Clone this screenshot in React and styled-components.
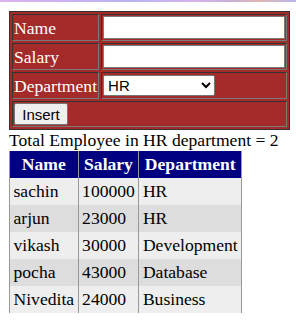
import React from 'react';
import styled, { createGlobalStyle } from 'styled-components';

const GlobalStyle = createGlobalStyle`
  body {
    margin: 0;
    background: #fff;
    font-family: "Liberation Serif", "Times New Roman", serif;
    font-size: 17.6px;
  }
`;

const employees = [
  { name: 'sachin', salary: 100000, department: 'HR' },
  { name: 'arjun', salary: 23000, department: 'HR' },
  { name: 'vikash', salary: 30000, department: 'Development' },
  { name: 'pocha', salary: 43000, department: 'Database' },
  { name: 'Nivedita', salary: 24000, department: 'Business' },
];

function App() {
  const dept = 'HR';
  const count = employees.filter((e) => e.department === dept).length;

  return (
    <>
      <GlobalStyle />
      <Strip />
      <Page>
        <FormTable>
          <tbody>
            <tr>
              <Label>Name</Label>
              <Field><TextInput type="text" /></Field>
            </tr>
            <tr>
              <Label>Salary</Label>
              <Field><TextInput type="text" /></Field>
            </tr>
            <tr>
              <Label>Department</Label>
              <Field>
                <Select defaultValue="HR">
                  <option>HR</option>
                  <option>Development</option>
                  <option>Database</option>
                  <option>Business</option>
                </Select>
              </Field>
            </tr>
            <tr>
              <Field colSpan={2}><Button>Insert</Button></Field>
            </tr>
          </tbody>
        </FormTable>

        <Total>Total Employee in {dept} department = {count}</Total>

        <DataTable>
          <thead>
            <tr>
              <Th>Name</Th>
              <Th>Salary</Th>
              <Th>Department</Th>
            </tr>
          </thead>
          <tbody>
            {employees.map((e, i) => (
              <Row key={e.name} $odd={i % 2 === 1}>
                <Td>{e.name}</Td>
                <Td>{e.salary}</Td>
                <Td>{e.department}</Td>
              </Row>
            ))}
          </tbody>
        </DataTable>
      </Page>
    </>
  );
}

const Strip = styled.div`
  height: 2px;
  background: linear-gradient(90deg, #dcb4ec 0%, #cdb0ee 20%, #b9b4f2 45%, #d7b2e9 65%, #c9b0d8 78%, #e0b6b0 88%, #b8b6f0 100%);
`;

const Page = styled.div`
  padding: 9px;
`;

const FormTable = styled.table`
  background: #a52a2a;
  border: 1px solid #333;
  border-spacing: 2px;
  color: #fff;
`;

const Label = styled.td`
  border: 1px solid #7a7a7a;
  border-top-color: #333;
  border-left-color: #333;
  padding: 1px;
  line-height: 20px;
  white-space: nowrap;
`;

const Field = styled.td`
  border: 1px solid #7a7a7a;
  border-top-color: #333;
  border-left-color: #333;
  padding: 1px;
`;

const TextInput = styled.input`
  display: block;
  box-sizing: border-box;
  width: 182px;
  height: 23px;
  margin: 0;
  border: 1px solid #7a7a7a;
  border-radius: 1px;
  background: #fff;
  font-family: "Liberation Sans", Arial, sans-serif;
  font-size: 15px;
`;

const Select = styled.select`
  display: block;
  box-sizing: border-box;
  width: 112px;
  height: 21px;
  margin: 1px 0;
  border: 1px solid #767676;
  border-radius: 2px;
  background: #fff;
  color: #000;
  font-family: "Liberation Sans", Arial, sans-serif;
  font-size: 15px;
`;

const Button = styled.button`
  display: block;
  box-sizing: border-box;
  width: 54px;
  height: 22px;
  margin: 0;
  padding: 0;
  border: 1px solid #767676;
  border-radius: 2px;
  background: #efefef;
  color: #000;
  font-family: "Liberation Sans", Arial, sans-serif;
  font-size: 15px;
`;

const Total = styled.div`
  line-height: 21px;
`;

const DataTable = styled.table`
  border-collapse: collapse;
  border-left: 1px solid #999;
`;

const Th = styled.th`
  background: #000080;
  color: #fff;
  font-weight: bold;
  padding: 3px 3.5px;
  border-right: 1px solid #999;
  line-height: 21px;
  text-align: center;
`;

const Row = styled.tr`
  background: ${(p) => (p.$odd ? '#ddd' : '#eee')};
`;

const Td = styled.td`
  padding: 3px 3.5px;
  border-right: 1px solid #999;
  line-height: 21px;
`;

export default App;
